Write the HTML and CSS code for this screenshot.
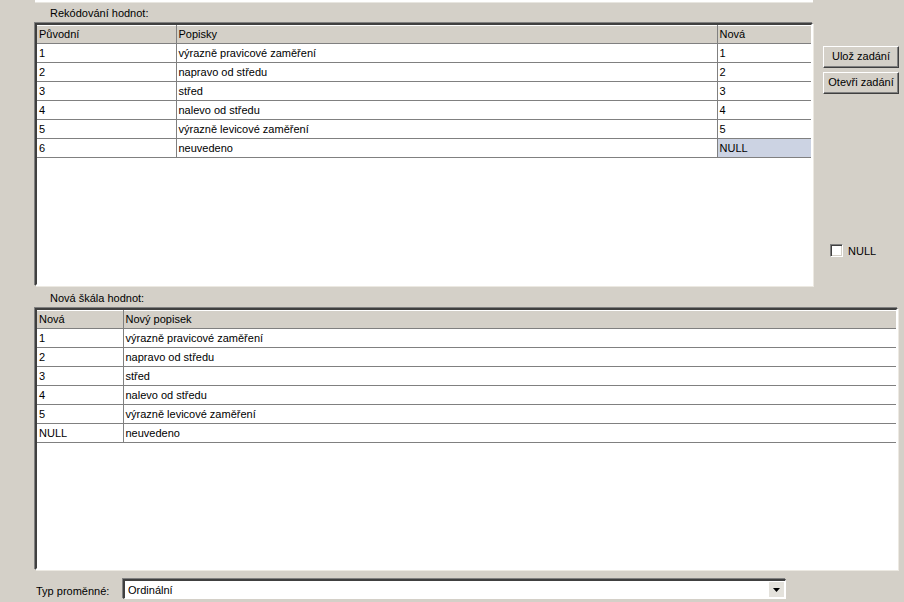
FILE: index.html
```html
<!DOCTYPE html>
<html>
<head>
<meta charset="utf-8">
<link rel="stylesheet" href="styles.css">
</head>
<body>
<div class="page">
  <div class="topstrip"></div>
  <div class="sec1">
    <div class="leftcol">
      <div class="caption">Rekódování hodnot:</div>
      <div class="gridbox box1">
        <table class="grid g1">
          <colgroup><col class="c1"><col class="c2"><col class="c3"></colgroup>
          <thead><tr><th>Původní</th><th>Popisky</th><th>Nová</th></tr></thead>
          <tbody>
            <tr><td>1</td><td>výrazně pravicové zaměření</td><td>1</td></tr>
            <tr><td>2</td><td>napravo od středu</td><td>2</td></tr>
            <tr><td>3</td><td>střed</td><td>3</td></tr>
            <tr><td>4</td><td>nalevo od středu</td><td>4</td></tr>
            <tr><td>5</td><td>výrazně levicové zaměření</td><td>5</td></tr>
            <tr><td>6</td><td>neuvedeno</td><td class="sel">NULL</td></tr>
          </tbody>
        </table>
      </div>
    </div>
    <div class="rightcol">
      <div class="btn">Ulož zadání</div>
      <div class="btn">Otevři zadání</div>
      <label class="chk"><span class="box"></span><span>NULL</span></label>
    </div>
  </div>
  <div class="caption cap2">Nová škála hodnot:</div>
  <div class="gridbox box2">
    <table class="grid g2">
      <colgroup><col class="d1"><col class="d2"></colgroup>
      <thead><tr><th>Nová</th><th>Nový popisek</th></tr></thead>
      <tbody>
        <tr><td>1</td><td>výrazně pravicové zaměření</td></tr>
        <tr><td>2</td><td>napravo od středu</td></tr>
        <tr><td>3</td><td>střed</td></tr>
        <tr><td>4</td><td>nalevo od středu</td></tr>
        <tr><td>5</td><td>výrazně levicové zaměření</td></tr>
        <tr><td>NULL</td><td>neuvedeno</td></tr>
      </tbody>
    </table>
  </div>
  <div class="bottom">
    <span class="typlabel">Typ proměnné:</span>
    <div class="combo">
      <span class="val">Ordinální</span>
      <span class="arrow"><svg width="7" height="4" viewBox="0 0 7 4"><path d="M0 0H7L3.5 4Z" fill="#000"/></svg></span>
    </div>
  </div>
</div>
</body>
</html>
```

FILE: styles.css
```css
html, body {
  margin: 0;
  padding: 0;
  background: #d4d0c8;
}
body {
  width: 904px;
  height: 602px;
  overflow: hidden;
  font-family: "Liberation Sans", Arial, sans-serif;
  font-size: 11px;
  color: #000;
}
.page {
  padding-left: 35px;
}
.topstrip {
  width: 778px;
  height: 2px;
  background: #fff;
  border-bottom: 1px solid #e8e6e0;
}
.sec1 {
  display: flex;
}
.leftcol {
  width: 778px;
}
.caption {
  height: 20px;
  line-height: 20px;
  padding-left: 15px;
  box-sizing: border-box;
}
.cap2 {
  height: 22px;
  line-height: 24px;
}
.gridbox {
  background: #fff;
  box-sizing: border-box;
  border-top: 2px solid #404040;
  border-left: 2px solid #404040;
  border-right: 2px solid #fff;
  border-bottom: 2px solid #fff;
  box-shadow: -1px -1px 0 #808080, 1px 1px 0 #ece9e2;
  overflow: hidden;
}
.box1 {
  width: 778px;
  height: 263px;
}
.box2 {
  width: 863px;
  height: 262px;
}
.grid {
  border-collapse: collapse;
  table-layout: fixed;
}
.g1 { width: 775px; }
.g2 { width: 860px; }
.c1 { width: 139px; }
.c2 { width: 541px; }
.c3 { width: 95px; }
.d1 { width: 86px; }
.d2 { width: 774px; }
.grid th, .grid td {
  height: 18px;
  padding: 0 0 0 2px;
  text-align: left;
  font-weight: normal;
  white-space: nowrap;
  overflow: hidden;
  border-right: 1px solid #808080;
  border-bottom: 1px solid #808080;
  line-height: 18px;
}
.grid th {
  background: #d4d0c8;
  border-left: 1px solid #fff;
  border-top: 1px solid #fff;
  height: 17px;
  line-height: 17px;
}
.grid th:first-child { border-left: none; }
.grid td.sel {
  background: #ccd3e3;
}
.rightcol {
  display: flex;
  flex-direction: column;
  align-items: flex-start;
  padding-left: 10px;
  padding-top: 43px;
}
.btn {
  width: 76px;
  height: 22px;
  box-sizing: border-box;
  line-height: 19px;
  text-align: center;
  background: #d4d0c8;
  border-top: 1px solid #fff;
  border-left: 1px solid #fff;
  border-right: 1px solid #404040;
  border-bottom: 1px solid #404040;
  box-shadow: inset -1px -1px 0 #808080;
  margin-bottom: 4px;
}
.chk {
  display: flex;
  align-items: center;
  margin-top: 146px;
  margin-left: 7px;
  gap: 5px;
}
.chk .box {
  width: 13px;
  height: 13px;
  box-sizing: border-box;
  background: #fff;
  border-top: 1px solid #808080;
  border-left: 1px solid #808080;
  border-right: 1px solid #fff;
  border-bottom: 1px solid #fff;
  box-shadow: inset 1px 1px 0 #404040, inset -1px -1px 0 #d4d0c8;
}
.bottom {
  display: flex;
  align-items: center;
  padding-top: 9px;
}
.typlabel {
  width: 87px;
  padding-left: 1px;
  padding-top: 4px;
}
.combo {
  width: 663px;
  height: 20px;
  box-sizing: border-box;
  background: #fff;
  border-top: 2px solid #404040;
  border-left: 2px solid #404040;
  border-right: 1px solid #fff;
  border-bottom: 1px solid #fff;
  box-shadow: -1px -1px 0 #808080;
  display: flex;
  align-items: center;
  justify-content: space-between;
}
.val {
  padding-left: 3px;
}
.arrow {
  width: 15px;
  height: 15px;
  display: flex;
  align-items: center;
  justify-content: center;
  background: #e4e2dc;
  margin-right: 1px;
}
```
